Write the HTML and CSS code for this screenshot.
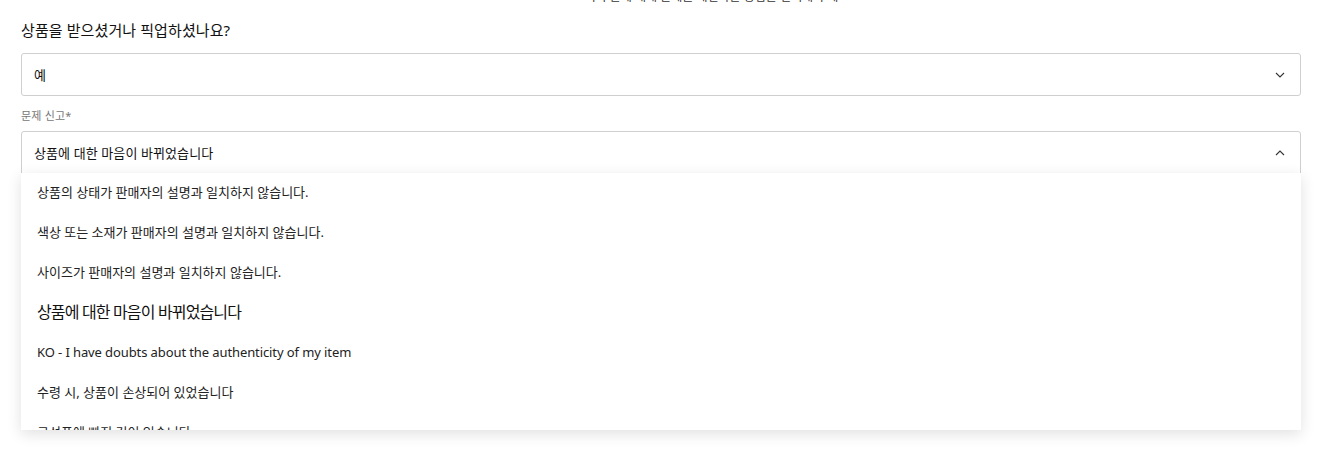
FILE: index.html
```html
<!DOCTYPE html>
<html lang="ko">
<head>
<meta charset="utf-8">
<link rel="stylesheet" href="styles.css">
</head>
<body>
<div class="page">
  <p class="cut-line">이 주문에 대해 문제를 해결하는 방법을 선택해 주세요</p>
  <h2 class="question">상품을 받으셨거나 픽업하셨나요?</h2>
  <div class="select">
    <span class="select-value">예</span>
    <svg class="chev" width="10" height="6" viewBox="0 0 10 6"><path d="M1 1l4 4 4-4" fill="none" stroke="#333" stroke-width="1.1"/></svg>
  </div>
  <div class="field-label">문제 신고*</div>
  <div class="combo">
    <div class="select open">
      <span class="select-value">상품에 대한 마음이 바뀌었습니다</span>
      <svg class="chev" width="10" height="6" viewBox="0 0 10 6"><path d="M1 5l4-4 4 4" fill="none" stroke="#333" stroke-width="1.1"/></svg>
    </div>
    <ul class="menu">
      <li class="opt">상품의 상태가 판매자의 설명과 일치하지 않습니다.</li>
      <li class="opt">색상 또는 소재가 판매자의 설명과 일치하지 않습니다.</li>
      <li class="opt">사이즈가 판매자의 설명과 일치하지 않습니다.</li>
      <li class="opt selected">상품에 대한 마음이 바뀌었습니다</li>
      <li class="opt latin">KO - I have doubts about the authenticity of my item</li>
      <li class="opt">수령 시, 상품이 손상되어 있었습니다</li>
      <li class="opt">구성품에 빠진 것이 있습니다</li>
    </ul>
  </div>
</div>
</body>
</html>
```
FILE: styles.css
```css
html, body {
  margin: 0;
  padding: 0;
  background: #fff;
}
body {
  font-family: "Noto Sans", "Noto Sans CJK KR", sans-serif;
  color: #111;
  overflow: hidden;
  height: 467px;
}
.page {
  padding: 0 17px 0 21px;
}
.cut-line {
  margin: -13px 0 0 0;
  height: 20px;
  line-height: 20px;
  font-size: 12px;
  color: #333;
  text-align: center;
  padding-left: 112px;
}
.question {
  margin: 0;
  padding: 7px 0 7px;
  line-height: 32px;
  font-size: 15px;
  font-weight: 400;
  letter-spacing: 0.1px;
  color: #111;
}
.select {
  box-sizing: border-box;
  height: 43px;
  border: 1px solid #cfcfcf;
  border-radius: 3px;
  display: flex;
  align-items: center;
  justify-content: space-between;
  padding: 0 15px 0 12px;
  background: #fff;
}
.select-value {
  font-size: 13px;
  letter-spacing: 0.1px;
  color: #111;
}
.chev { display: block; }
.field-label {
  height: 35px;
  line-height: 40px;
  font-size: 11px;
  color: #777;
  letter-spacing: 0.2px;
}
.combo {
  position: relative;
  height: 300px;
}
.select.open {
  border-radius: 3px 3px 0 0;
}
.menu {
  position: absolute;
  left: 0;
  right: 0;
  top: 42px;
  height: 257px;
  margin: 0;
  padding: 0;
  list-style: none;
  overflow: hidden;
  background: #fff;
  box-shadow: 0 4px 14px rgba(0,0,0,0.12);
}
.opt {
  height: 40px;
  line-height: 38px;
  padding-left: 16px;
  font-size: 13px;
  letter-spacing: 0;
  color: #222;
}
.opt.latin {
  letter-spacing: -0.1px;
}
.opt.selected {
  font-size: 16px;
  letter-spacing: -0.85px;
  color: #111;
}
```
